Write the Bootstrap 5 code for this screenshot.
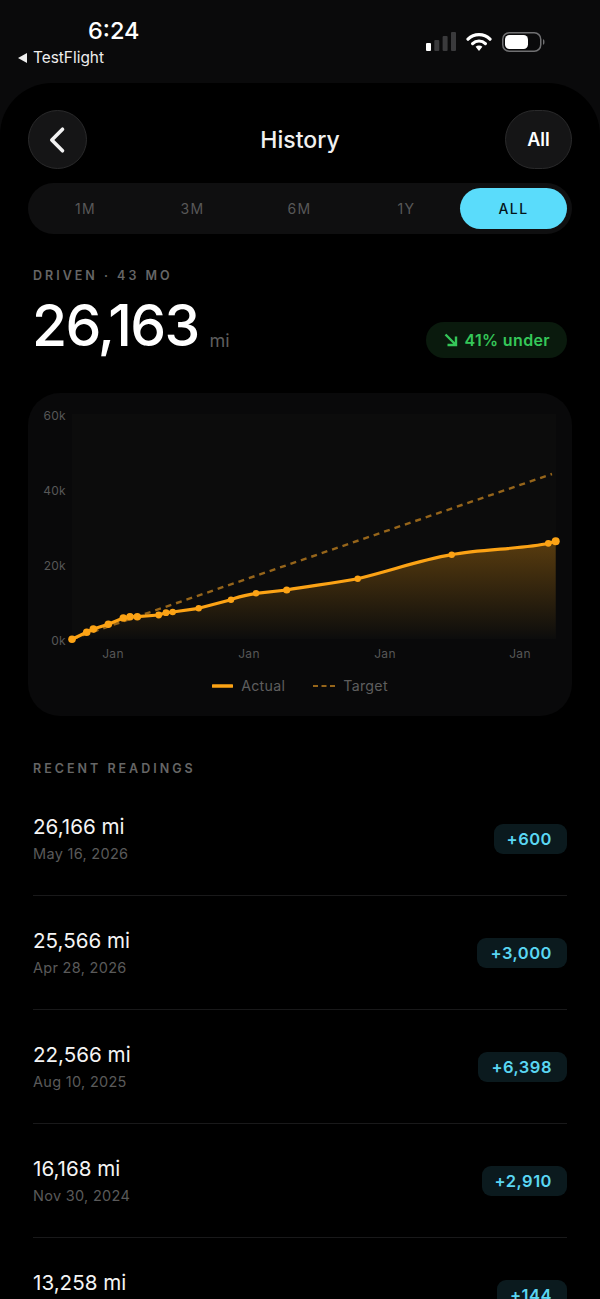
<!DOCTYPE html>
<html lang="en">
<head>
    <meta charset="UTF-8">
    <meta name="viewport" content="width=device-width, initial-scale=1.0">
    <title>History</title>
    <link href="https://cdn.jsdelivr.net/npm/bootstrap@5.3.0/dist/css/bootstrap.min.css" rel="stylesheet">
    <style>
        html, body { height: 100%; }
        body { width: 600px; height: 1299px; overflow: hidden; background: #0a0a0b; color: #fff; font-family: Inter, "Liberation Sans", sans-serif; }
        /* status bar */
        .status-strip { height: 83px; padding: 0 55px 0 18px; }
        .status-left { padding-top: 17px; }
        .status-time { font-size: 23.5px; font-weight: 500; line-height: 28px; padding-left: 70px; }
        .status-back { font-size: 15.4px; line-height: 18px; margin-top: 4px; color: #eee; }
        .status-back svg { margin-right: 6px; }
        .status-icons { padding-top: 32px; gap: 10px; }
        /* screen */
        .screen-sheet { height: 1216px; background: #000; border-radius: 52px 52px 0 0; padding: 27px 28px 0; }
        .round-btn { height: 59px; background: #151516; border: 1px solid #2a2a2b; border-radius: 30px; color: #fff; padding: 0; font-size: 18px; font-weight: 600; flex: none; }
        .round-btn:hover { background: #151516; color: #fff; border-color: #2a2a2b; }
        .back-btn { width: 59px; margin-right: 8px; }
        .all-btn { width: 67px; }
        .page-title { font-size: 23px; font-weight: 500; color: #f0f0f0; padding-top: 1px; }
        .range-track { height: 51px; margin-top: 14px; background: #0f0f10; border-radius: 26px; padding: 5px 5px 5px 4px; }
        .range-track .nav-link { height: 41px; padding: 0; line-height: 41px; border-radius: 21px; font-size: 14px; font-weight: 400; letter-spacing: 1.4px; color: #585858; }
        .range-track .nav-link.active { background: #5adcfb; color: #04141a; font-weight: 500; }
        .micro-label { font-size: 12.5px; font-weight: 600; letter-spacing: 3px; color: #666; line-height: 16px; margin-left: 5px; }
        .driven-block { margin-top: 34px; }
        .driven-row { margin-top: 6px; height: 70px; padding: 0 5px 0 4px; }
        .driven-num { font-size: 57px; font-weight: 500; line-height: 70px; letter-spacing: -1.7px; padding-top: 2px; }
        .driven-unit { font-size: 18px; color: #5e5e5e; margin-left: 11px; margin-top: 31px; }
        .under-pill { height: 36px; margin-top: 32px; padding: 0 17px 0 18px; column-gap: 6px; background: #0a1a0d; border-radius: 18px; color: #35c759; font-size: 16px; font-weight: 600; letter-spacing: .35px; }
        .chart-panel { height: 323px; margin-top: 33px; background: #09090a; border: 0; border-radius: 32px; }
        .chart-panel svg { display: block; }
        .chart-axis { font-size: 12px; fill: #575757; letter-spacing: .3px; }
        .legend-row { color: #5e5e5e; font-size: 14.2px; line-height: 18px; letter-spacing: .3px; }
        .legend-gap { margin-left: 28px; }
        .readings-block { margin-top: 45px; }
        .reading-list { margin: 5px 5px 0; --bs-list-group-bg: transparent; --bs-list-group-border-color: #19191a; }
        .reading-item { height: 114px; padding: 0; color: #fff; }
        .reading-val { font-size: 20.6px; line-height: 24px; color: #f4f4f4; margin-top: 33px; font-weight: 400; }
        .reading-date { font-size: 14.5px; line-height: 18px; color: #5a5a5a; margin-top: 6px; letter-spacing: .3px; }
        .delta-pill { height: 30px; line-height: 30px; padding: 0 15px 0 13px; margin-top: 42px; background: #0b1a1e; border-radius: 9px; color: #5ad6f2; font-size: 16.5px; font-weight: 600; letter-spacing: .5px; }
    </style>
</head>
<body>
    <!-- status bar -->
    <div class="status-strip d-flex justify-content-between">
        <div class="status-left">
            <div class="status-time">6:24</div>
            <div class="status-back d-flex align-items-center">
                <svg width="9" height="10" viewBox="0 0 9 10"><path d="M9 0v10L0 5z" fill="#eee"/></svg>
                <span>TestFlight</span>
            </div>
        </div>
        <div class="status-icons d-flex">
            <svg width="30" height="20" viewBox="0 0 30 20">
                <rect x="0" y="11" width="5" height="8" rx="1" fill="#fff"/>
                <rect x="8.3" y="8" width="5" height="11" rx="1" fill="#3a3a3c"/>
                <rect x="16.6" y="4" width="5" height="15" rx="1" fill="#3a3a3c"/>
                <rect x="25" y="0" width="5" height="19" rx="1" fill="#3a3a3c"/>
            </svg>
            <svg width="26" height="20" viewBox="0 0 26 20">
                <path d="M2 7.2a15.6 15.6 0 0 1 22 0" fill="none" stroke="#fff" stroke-width="3.2" stroke-linecap="round"/>
                <path d="M6.6 11.6a9.2 9.2 0 0 1 12.8 0" fill="none" stroke="#fff" stroke-width="3.2" stroke-linecap="round"/>
                <path d="M9.6 14.8a4.8 4.8 0 0 1 6.8 0L13 19z" fill="#fff"/>
            </svg>
            <svg width="43" height="20" viewBox="0 0 43 20">
                <rect x=".75" y=".75" width="38" height="18.5" rx="6.5" fill="none" stroke="#707072" stroke-width="1.5"/>
                <rect x="3" y="3" width="23" height="14" rx="4.5" fill="#fff"/>
                <path d="M41 7v6a3 3 0 0 0 1.5-3A3 3 0 0 0 41 7z" fill="#707072"/>
            </svg>
        </div>
    </div>

    <div class="screen-sheet">
        <!-- header -->
        <div class="d-flex align-items-center">
            <button class="btn round-btn back-btn d-flex align-items-center justify-content-center" type="button" aria-label="Back">
                <svg width="18" height="28" viewBox="0 0 18 28"><path d="M13.5 3.2L2.8 14l10.7 10.8" fill="none" stroke="#f2f2f2" stroke-width="3.6" stroke-linecap="round" stroke-linejoin="round"/></svg>
            </button>
            <div class="page-title flex-grow-1 text-center">History</div>
            <button class="btn round-btn all-btn" type="button">All</button>
        </div>

        <!-- range -->
        <ul class="nav nav-pills nav-justified range-track">
            <li class="nav-item"><a class="nav-link" href="#">1M</a></li>
            <li class="nav-item"><a class="nav-link" href="#">3M</a></li>
            <li class="nav-item"><a class="nav-link" href="#">6M</a></li>
            <li class="nav-item"><a class="nav-link" href="#">1Y</a></li>
            <li class="nav-item"><a class="nav-link active" href="#">ALL</a></li>
        </ul>

        <!-- total -->
        <div class="driven-block">
            <div class="micro-label">DRIVEN · 43 MO</div>
            <div class="driven-row d-flex justify-content-between">
                <div class="d-flex align-items-center">
                    <span class="driven-num">26,163</span>
                    <span class="driven-unit">mi</span>
                </div>
                <div class="under-pill d-flex align-items-center">
                    <svg width="14" height="14" viewBox="0 0 14 14"><path d="M1.5 1.5L12 12M12 3.5V12H3.5" fill="none" stroke="#35c759" stroke-width="2.4"/></svg>
                    <span>41% under</span>
                </div>
            </div>
        </div>

        <!-- chart -->
        <div class="card chart-panel">
            <svg width="544" height="284" viewBox="28 393 544 284">
                <defs>
                    <linearGradient id="areaFill" x1="0" y1="0" x2="0" y2="1">
                        <stop offset="0" stop-color="#fca315" stop-opacity=".32"/>
                        <stop offset="1" stop-color="#fca315" stop-opacity="0"/>
                    </linearGradient>
                </defs>
                <rect x="72" y="414" width="484" height="225" fill="#0c0c0c"/>
                <g class="chart-axis" text-anchor="end">
                    <text x="66" y="419.5">60k</text>
                    <text x="66" y="494.5">40k</text>
                    <text x="66" y="569.5">20k</text>
                    <text x="66" y="644.5">0k</text>
                </g>
                <g class="chart-axis" text-anchor="middle">
                    <text x="113" y="658">Jan</text>
                    <text x="249" y="658">Jan</text>
                    <text x="385" y="658">Jan</text>
                    <text x="520" y="658">Jan</text>
                </g>
                <path d="M72 639.3L86.7 632.3 93.3 629 108.3 624.3 123.3 618 130 616.7 137.3 616.7 158.7 615 166 612.7 172.7 612 198.7 608.3 231 599.7C240 596 248 595 256 593.3 268 592 278 591 286.7 590 310 586 335 583 357.7 578.7 390 571 420 560 451.7 554.7 480 549 525 549 548.3 543.3L555.7 541.3V639H72Z" fill="url(#areaFill)"/>
                <line x1="72" y1="639" x2="552" y2="474" stroke="#96651a" stroke-width="2.4" stroke-dasharray="6 5"/>
                <path d="M72 639.3L86.7 632.3 93.3 629 108.3 624.3 123.3 618 130 616.7 137.3 616.7 158.7 615 166 612.7 172.7 612 198.7 608.3 231 599.7C240 596 248 595 256 593.3 268 592 278 591 286.7 590 310 586 335 583 357.7 578.7 390 571 420 560 451.7 554.7 480 549 525 549 548.3 543.3L555.7 541.3" fill="none" stroke="#fca315" stroke-width="3.2" stroke-linejoin="round"/>
                <g fill="#fca315">
                    <circle cx="72" cy="639.3" r="3.8"/>
                    <circle cx="86.7" cy="632.3" r="3.8"/>
                    <circle cx="93.3" cy="629" r="3.8"/>
                    <circle cx="108.3" cy="624.3" r="3.8"/>
                    <circle cx="123.3" cy="618" r="3.8"/>
                    <circle cx="130" cy="616.7" r="3.8"/>
                    <circle cx="137.3" cy="616.7" r="3.8"/>
                    <circle cx="158.7" cy="615" r="3.4"/>
                    <circle cx="166" cy="612.7" r="3.4"/>
                    <circle cx="172.7" cy="612" r="3.2"/>
                    <circle cx="198.7" cy="608.3" r="3.2"/>
                    <circle cx="231" cy="599.7" r="3.2"/>
                    <circle cx="256" cy="593.3" r="3.2"/>
                    <circle cx="286.7" cy="590" r="3.6"/>
                    <circle cx="357.7" cy="578.7" r="3.2"/>
                    <circle cx="451.7" cy="554.7" r="3.2"/>
                    <circle cx="548.3" cy="543.3" r="3.4"/>
                    <circle cx="555.7" cy="541.3" r="4"/>
                </g>
            </svg>
            <div class="legend-row d-flex justify-content-center align-items-center">
                <svg width="21" height="4" viewBox="0 0 21 4"><line x1="1" y1="2" x2="20" y2="2" stroke="#fca315" stroke-width="3.4" stroke-linecap="round"/></svg>
                <span class="ms-2">Actual</span>
                <svg class="legend-gap" width="22" height="4" viewBox="0 0 22 4"><line x1="0" y1="2" x2="22" y2="2" stroke="#96651a" stroke-width="2.2" stroke-dasharray="5 3.5"/></svg>
                <span class="ms-2">Target</span>
            </div>
        </div>

        <!-- readings -->
        <div class="readings-block">
            <div class="micro-label">RECENT READINGS</div>
            <div class="list-group list-group-flush reading-list" id="readingList"></div>
        </div>
    </div>

    <script src="https://cdn.jsdelivr.net/npm/bootstrap@5.3.0/dist/js/bootstrap.bundle.min.js"></script>
    <script>
        const readings = [
            ['26,166 mi', 'May 16, 2026', '+600'],
            ['25,566 mi', 'Apr 28, 2026', '+3,000'],
            ['22,566 mi', 'Aug 10, 2025', '+6,398'],
            ['16,168 mi', 'Nov 30, 2024', '+2,910'],
            ['13,258 mi', '', '+144']
        ];
        const list = document.getElementById('readingList');
        readings.forEach(r => {
            const item = document.createElement('div');
            item.className = 'list-group-item reading-item d-flex justify-content-between';
            item.innerHTML = `
                <div>
                    <div class="reading-val">${r[0]}</div>
                    <div class="reading-date">${r[1]}</div>
                </div>
                <div class="delta-pill">${r[2]}</div>
            `;
            list.appendChild(item);
        });
    </script>
</body>
</html>
